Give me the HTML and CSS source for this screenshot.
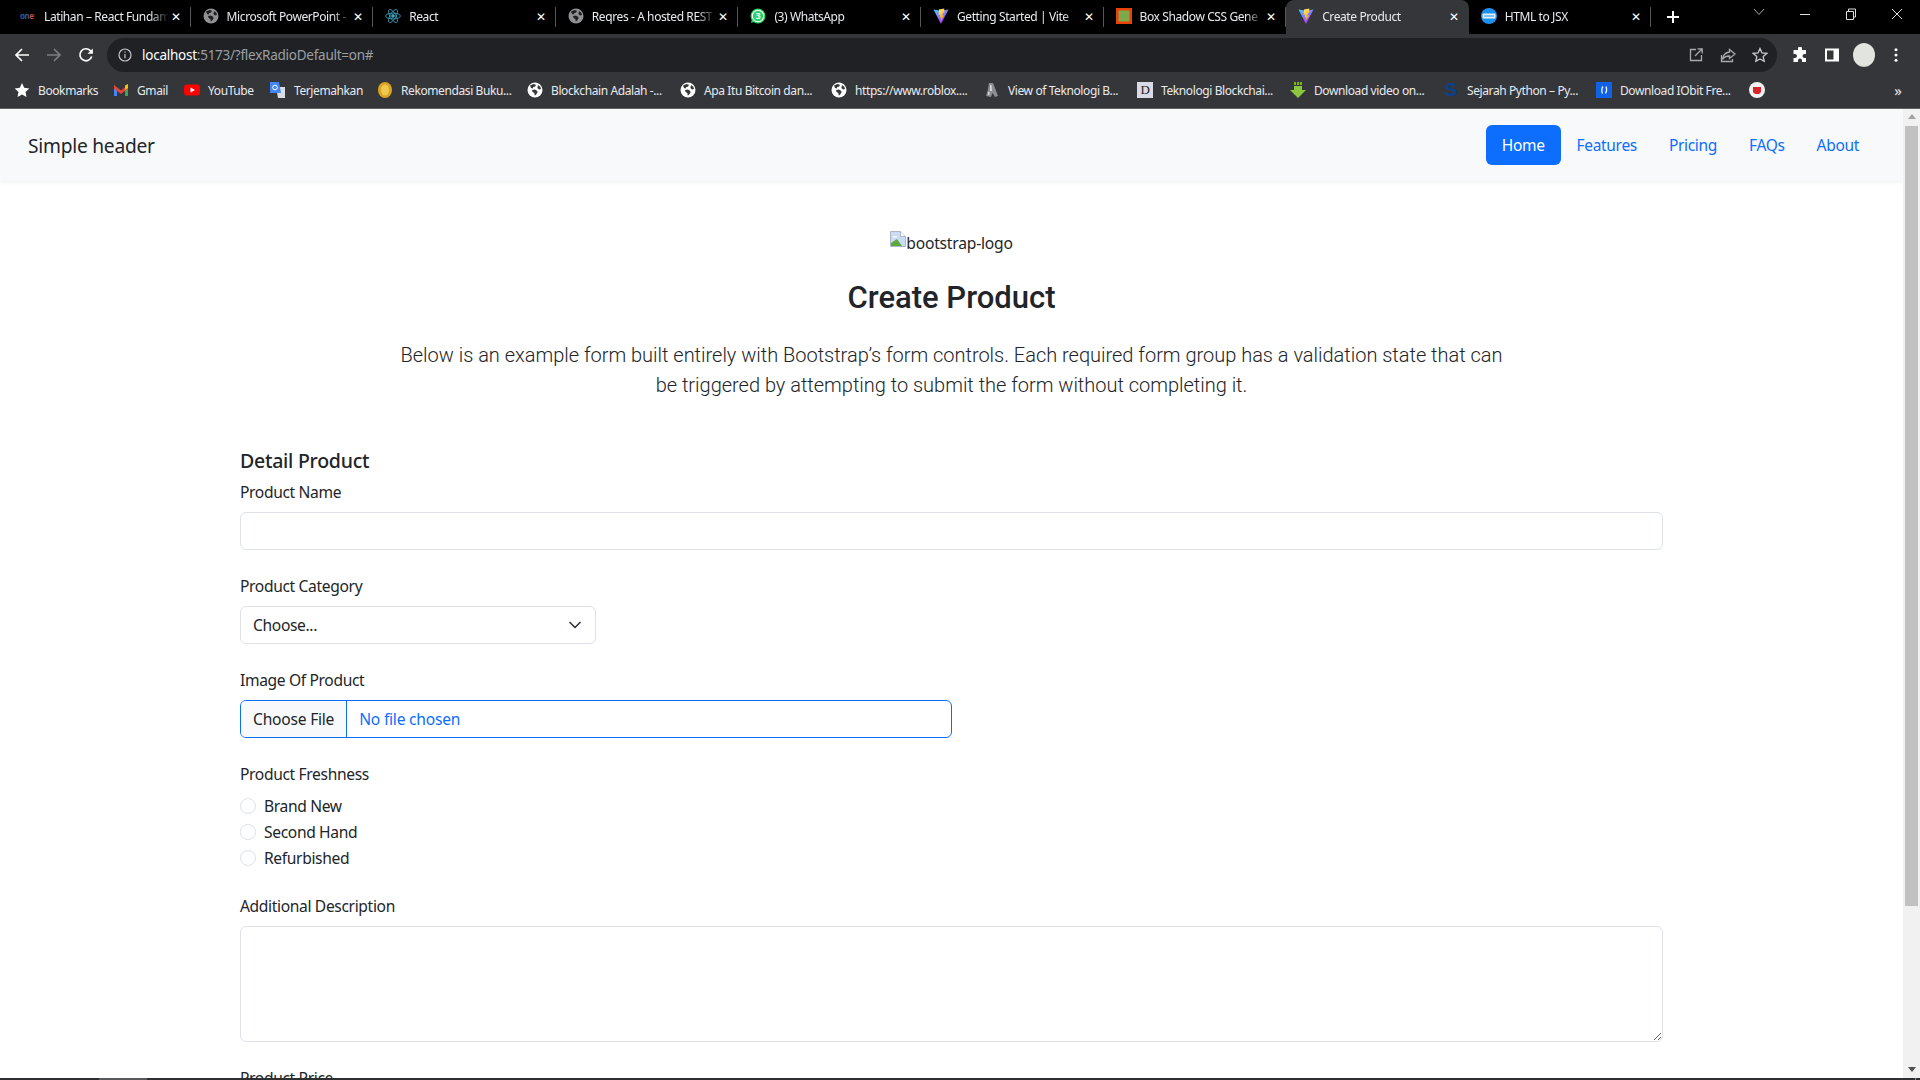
FILE: index.html
```html
<!DOCTYPE html>
<html lang="en">
<head>
<meta charset="utf-8">
<title>Create Product</title>
<link rel="stylesheet" href="styles.css">
</head>
<body>
<svg class="defs" width="0" height="0" aria-hidden="true">
  <defs>
    <linearGradient id="vp" x1="0" y1="0" x2="0.6" y2="1"><stop offset="0" stop-color="#41d1ff"/><stop offset="1" stop-color="#bd34fe"/></linearGradient>
    <linearGradient id="vy" x1="0" y1="0" x2="0.4" y2="1"><stop offset="0" stop-color="#ffea83"/><stop offset="1" stop-color="#ffa800"/></linearGradient>
    <symbol id="globe" viewBox="0 0 16 16"><circle cx="8" cy="8" r="7.5" fill="currentColor"/><path d="M3 3.5 6.5 2l2.5.7-1 2-1.7.3-.6 1.6-1.7-.6zM5 8l3-.5 2.3 1.5.2 1.6-1.8 2.4-.9.5-.5-2.6L5.600 10zM11 3l2.300 1.800.7 2.200-2 .5-1.600-1.500z" fill="#000" fill-opacity=".78"/></symbol>
    <symbol id="vite" viewBox="0 0 16 16"><path d="M15.500 1.500 8.300 15.300a.4.4 0 0 1-.7 0L.5 1.500 8 2.800z" fill="url(#vp)"/><path d="M11.300.5 6 1.500l-.3 5.500 1.600-.4-.4 3 1.500-.4-.3 3.300L11 7.500l-1.600.3.500-3 1.400.1z" fill="url(#vy)"/></symbol>
  </defs>
</svg>

<div class="screen">
  <header class="chrome">
    <div class="tabstrip">
      <div class="tab">
        <span class="fav one">on<i>e</i></span>
        <span class="tab-title">Latihan – React Fundam</span><span class="x">✕</span>
      </div>
      <div class="tab">
        <svg class="fav gray"><use href="#globe"/></svg>
        <span class="tab-title">Microsoft PowerPoint -</span><span class="x">✕</span>
      </div>
      <div class="tab">
        <svg class="fav" viewBox="0 0 16 16" fill="none" stroke="#3aa6c4" stroke-width=".8"><ellipse cx="8" cy="8" rx="7.400" ry="2.900"/><ellipse cx="8" cy="8" rx="7.400" ry="2.900" transform="rotate(60 8 8)"/><ellipse cx="8" cy="8" rx="7.400" ry="2.900" transform="rotate(120 8 8)"/><circle cx="8" cy="8" r="1.400" fill="#3aa6c4"/></svg>
        <span class="tab-title">React</span><span class="x">✕</span>
      </div>
      <div class="tab">
        <svg class="fav gray"><use href="#globe"/></svg>
        <span class="tab-title">Reqres - A hosted REST</span><span class="x">✕</span>
      </div>
      <div class="tab">
        <svg class="fav" viewBox="0 0 16 16"><circle cx="8" cy="8" r="7.500" fill="#25d366"/><path d="M1 15l1.200-4.500 3 3z" fill="#25d366"/><circle cx="8" cy="8" r="5.700" fill="none" stroke="#fff" stroke-width="1.100"/><text x="8" y="11.200" class="wa-num" text-anchor="middle">3</text></svg>
        <span class="tab-title">(3) WhatsApp</span><span class="x">✕</span>
      </div>
      <div class="tab">
        <svg class="fav"><use href="#vite"/></svg>
        <span class="tab-title">Getting Started | Vite</span><span class="x">✕</span>
      </div>
      <div class="tab">
        <svg class="fav" viewBox="0 0 16 16"><rect width="16" height="16" fill="#e8410c"/><rect x="2.500" y="2.500" width="11" height="11" fill="#7fa84a"/></svg>
        <span class="tab-title">Box Shadow CSS Gene</span><span class="x">✕</span>
      </div>
      <div class="tab active">
        <svg class="fav"><use href="#vite"/></svg>
        <span class="tab-title">Create Product</span><span class="x">✕</span>
      </div>
      <div class="tab last">
        <svg class="fav" viewBox="0 0 16 16"><circle cx="8" cy="8" r="8" fill="#1e90ee"/><rect x="1.500" y="5.500" width="13" height="5" rx="1" fill="#dff0ff"/><rect x="3" y="7.500" width="10" height="1" fill="#1e90ee"/></svg>
        <span class="tab-title">HTML to JSX</span><span class="x">✕</span>
      </div>
      <div class="newtab">
        <svg width="14" height="14" viewBox="0 0 14 14"><path d="M7 1v12M1 7h12" stroke="#fff" stroke-width="2"/></svg>
      </div>
      <div class="winctl">
        <svg class="w-chev" width="12" height="8" viewBox="0 0 12 8" fill="none" stroke="#aaa"><path d="M1 1l5 5.500L11 1"/></svg>
        <svg class="w-btn" width="46" height="12" viewBox="0 0 46 12" fill="none" stroke="#ddd"><path d="M18 6.500h10"/></svg>
        <svg class="w-btn" width="46" height="12" viewBox="0 0 46 12" fill="none" stroke="#ddd"><path d="M18.500 3.500h7v8h-7zM20.500 3.500V1h7v8h-2"/></svg>
        <svg class="w-btn" width="46" height="12" viewBox="0 0 46 12" fill="none" stroke="#ddd"><path d="M18 1l10 10M28 1 18 11"/></svg>
      </div>
    </div>

    <div class="toolbar">
      <svg class="tb-ico" viewBox="0 0 16 16" fill="none" stroke="#fff" stroke-width="1.700"><path d="M15 8H2M8 2 2 8l6 6"/></svg>
      <svg class="tb-ico" viewBox="0 0 16 16" fill="none" stroke="#7c7d7e" stroke-width="1.700"><path d="M1 8h13M8 2l6 6-6 6"/></svg>
      <svg class="tb-ico" viewBox="0 0 16 16" fill="none" stroke="#fff" stroke-width="1.700"><path d="M13.700 9.500A6 6 0 1 1 12.300 3.600L14.500 6"/><path d="M14.800 1.500v5.200H9.600z" stroke="none" fill="#fff"/></svg>
      <div class="omnibox">
        <svg class="info" viewBox="0 0 14 14" fill="none" stroke="#c4c7c9" stroke-width="1.200"><circle cx="7" cy="7" r="6"/><path d="M7 6v4.300M7 3.500v1.300"/></svg>
        <span class="url"><b>localhost</b>:5173/?flexRadioDefault=on#</span>
        <div class="omni-right">
          <svg class="om-ico" viewBox="0 0 16 16" fill="none" stroke="#a8abae" stroke-width="1.300"><path d="M8 2.500H2.500v11h11V8M7 9l7-7M9.500 1.800h4.700v4.700"/></svg>
          <svg class="om-ico" viewBox="0 0 16 16" fill="none" stroke="#a8abae" stroke-width="1.300"><path d="M9.500 2.500 15 7l-5.500 4.500V9C6 9 4 10 2.500 12.500 3 8.500 5.500 5.500 9.500 5z"/><path d="M1.500 8v6.500h11V12"/></svg>
          <svg class="om-ico" viewBox="0 0 16 16" fill="none" stroke="#c9cbce" stroke-width="1.300"><path d="m8 1.500 2 4.400 4.800.5-3.600 3.200 1 4.700L8 11.900l-4.200 2.400 1-4.700L1.200 6.400 6 5.900z"/></svg>
        </div>
      </div>
      <div class="tb-right">
        <svg class="tb-ico" viewBox="0 0 16 16" fill="#fff"><path d="M6 1.500a2 2 0 0 1 4 0V3h4v4h-1.500a2 2 0 0 0 0 4H14v4h-4v-1.500a2 2 0 0 0-4 0V15H1.500v-4H3a2 2 0 0 0 0-4H1.500V3H6z"/></svg>
        <svg class="tb-ico" viewBox="0 0 16 16"><path d="M1 1.500h14v13H1z" fill="#fff"/><path d="M3 3.500h6.500v9H3z" fill="#35363a"/></svg>
        <span class="avatar"></span>
        <svg class="tb-ico" viewBox="0 0 16 16" fill="#fff"><circle cx="8" cy="2.800" r="1.500"/><circle cx="8" cy="8" r="1.500"/><circle cx="8" cy="13.200" r="1.500"/></svg>
      </div>
    </div>

    <nav class="bookmarks">
      <span class="bm w-a"><svg class="bm-ico" viewBox="0 0 16 16" fill="#fff"><path d="m8 1 2.200 4.800 5.100.6-3.800 3.500 1 5.100L8 12.400 3.500 15l1-5.100L.7 6.400l5.100-.6z"/></svg>Bookmarks</span>
      <span class="bm w-b"><svg class="bm-ico" viewBox="0 0 16 16"><path d="M1 3v11h3V7z" fill="#4285f4"/><path d="M15 3v11h-3V7z" fill="#34a853"/><path d="M1 3l7 5.500L15 3v3.500L8 12 1 6.500z" fill="#ea4335"/><path d="M12 3.500 15 2v4l-3 2z" fill="#fbbc04"/></svg>Gmail</span>
      <span class="bm w-c"><svg class="bm-ico" viewBox="0 0 16 16"><rect y="2.500" width="16" height="11" rx="3" fill="#f00"/><path d="m6.500 5.500 4.500 2.500-4.500 2.500z" fill="#fff"/></svg>YouTube</span>
      <span class="bm w-d"><svg class="bm-ico" viewBox="0 0 16 16"><path d="M6 5h9v11H8z" fill="#dadce0"/><path d="M0 0h9l2 11H0z" fill="#4285f4"/><circle cx="5" cy="5.500" r="2.300" fill="none" stroke="#fff"/></svg>Terjemahkan</span>
      <span class="bm w-f"><svg class="bm-ico" viewBox="0 0 16 16"><ellipse cx="8" cy="8" rx="7" ry="8" fill="#d9a520"/><ellipse cx="8" cy="8" rx="4" ry="5.500" fill="#f1c84f"/></svg>Rekomendasi Buku...</span>
      <span class="bm"><svg class="bm-ico white"><use href="#globe"/></svg>Blockchain Adalah -...</span>
      <span class="bm w-g"><svg class="bm-ico white"><use href="#globe"/></svg>Apa Itu Bitcoin dan...</span>
      <span class="bm"><svg class="bm-ico white"><use href="#globe"/></svg>https://www.roblox....</span>
      <span class="bm"><svg class="bm-ico" viewBox="0 0 16 16"><path d="M5 1h4l2 5 3 8-3 1-2.500-4L7 15l-5-1 2-7z" fill="#8a8d92"/><path d="M6 3h1.500l.5 6H6zM4 10h1.500v3H4z" fill="#d6d7d9"/></svg>View of Teknologi B...</span>
      <span class="bm"><span class="bm-ico wiki">D</span>Teknologi Blockchai...</span>
      <span class="bm"><svg class="bm-ico" viewBox="0 0 16 16"><path d="M4 0h2v3H4zM7 0h2v3H7zM10 0h2v3h-2z" fill="#7ab800"/><path d="M4 4h8v4h4l-8 8-8-8h4z" fill="#8cc63f"/></svg>Download video on...</span>
      <span class="bm"><span class="bm-ico scribd">S</span>Sejarah Python – Py...</span>
      <span class="bm"><svg class="bm-ico" viewBox="0 0 16 16"><rect width="16" height="16" fill="#0f62e6"/><path d="M7 4.500C5.500 6 5.500 10 6.500 11.500M10 4.500c.8 2 .8 5-.5 7" stroke="#fff" fill="none" stroke-width="1.200"/></svg>Download IObit Fre...</span>
      <span class="bm w-e"><svg class="bm-ico" viewBox="0 0 16 16"><circle cx="8" cy="8" r="8" fill="#f1f1f1"/><path d="M4 5h8v5l-2 2H6l-2-2z" fill="#d8232a"/></svg></span>
      <span class="more">»</span>
    </nav>
  </header>

  <div class="viewport">
    <main class="page">
      <div class="navbar">
        <span class="brand">Simple header</span>
        <ul class="pills">
          <li class="pill current">Home</li>
          <li class="pill">Features</li>
          <li class="pill">Pricing</li>
          <li class="pill">FAQs</li>
          <li class="pill">About</li>
        </ul>
      </div>

      <section class="hero">
        <div class="logo-alt">
          <svg class="broken" width="16" height="16" viewBox="0 0 16 16"><path d="M.5.500h10l5 5v10H.5z" fill="#c9dcf6" stroke="#aeb6c6"/><path d="M10.500.5v5h5" fill="#fff" stroke="#aeb6c6"/><path d="M1 15v-3l6-4 5 7z" fill="#5da83a"/><path d="M3 5h4v1.500H3z" fill="#fff"/></svg><span>bootstrap-logo</span>
        </div>
        <h1 class="title">Create Product</h1>
        <p class="lead">Below is an example form built entirely with Bootstrap’s form controls. Each required form group has a validation state that can be triggered by attempting to submit the form without completing it.</p>
      </section>

      <form class="form">
        <h2 class="section-title">Detail Product</h2>
        <div class="group first">
          <label class="lbl" for="pn">Product Name</label>
          <input class="control" id="pn" type="text">
        </div>
        <div class="group">
          <label class="lbl" for="pc">Product Category</label>
          <div class="control select" id="pc">Choose...
            <svg class="caret" width="16" height="16" viewBox="0 0 16 16" fill="none" stroke="#343a40" stroke-width="1.700" stroke-linecap="round" stroke-linejoin="round"><path d="m3 5.500 5 5 5-5"/></svg>
          </div>
        </div>
        <div class="group">
          <label class="lbl">Image Of Product</label>
          <div class="control file"><span class="file-btn">Choose File</span><span class="file-name">No file chosen</span></div>
        </div>
        <div class="group">
          <label class="lbl">Product Freshness</label>
          <div class="radios">
            <label class="radio"><input type="radio" class="dot" name="f">Brand New</label>
            <label class="radio"><input type="radio" class="dot" name="f">Second Hand</label>
            <label class="radio"><input type="radio" class="dot" name="f">Refurbished</label>
          </div>
        </div>
        <div class="group">
          <label class="lbl" for="ad">Additional Description</label>
          <textarea class="control area" id="ad"></textarea>
        </div>
        <div class="group">
          <label class="lbl">Product Price</label>
        </div>
      </form>
    </main>
    <aside class="scrollbar">
      <span class="arrow up"></span>
      <span class="thumb"></span>
      <span class="arrow down"></span>
    </aside>
  </div>
  <footer class="taskedge"><span class="edge-lit"></span><span class="edge-tick"></span></footer>
</div>
</body>
</html>
```
FILE: styles.css
```css
* { box-sizing: border-box; }
html, body { margin: 0; height: 100%; overflow: hidden; background: #fff; }
body { font-family: "Noto Sans", "Open Sans", sans-serif; color: #212529; font-size: 15.600px; }
.defs { display: block; height: 0; }
.screen { height: 1080px; display: flex; flex-direction: column; }

/* browser chrome */
.chrome { flex: none; height: 109px; background: #35363a; border-bottom: 1px solid #5e5f61; color: #fff; font-size: 12px; }
.tabstrip { height: 34px; background: #000; display: flex; align-items: center; padding-left: 8px; }
.tab { width: 182.600px; height: 34px; display: flex; align-items: center; padding: 0 8px 2px 12px; position: relative; flex: none; }
.tab::after { content: ""; position: absolute; right: 0; top: 7px; height: 20px; width: 1px; background: #55565a; }
.tab.active { background: #35363a; border-radius: 8px 8px 0 0; }
.tab.active::after { display: none; }
.fav { width: 16px; height: 16px; flex: none; margin-right: 8px; display: block; }
.gray { color: #8f9194; }
.one { font: bold 8px "Noto Sans", sans-serif; color: #2a5ba8; line-height: 16px; letter-spacing: -.5px; }
.one i { color: #d8432e; font-style: normal; }
.tab-title { flex: 1; min-width: 0; white-space: nowrap; overflow: hidden; color: #e8eaed; letter-spacing: -.4px; -webkit-mask-image: linear-gradient(90deg, #000 85%, transparent); mask-image: linear-gradient(90deg, #000 85%, transparent); }
.wa-num { fill: #fff; font-size: 9px; font-weight: 700; }
.x { width: 14px; flex: none; text-align: center; font-size: 11.500px; color: #fff; }
.newtab { width: 44px; display: flex; justify-content: center; }
.winctl { margin-left: auto; display: flex; align-items: flex-start; height: 34px; padding-top: 8px; }
.w-chev { margin: 0 17px 0 0; }
.w-btn { display: block; width: 46px; }

.toolbar { height: 38.500px; display: flex; align-items: center; padding: 3px 0 0 14px; }
.tb-ico { width: 16px; height: 16px; flex: none; margin-right: 16px; display: block; }
.omnibox { width: 1673px; height: 34.500px; margin-left: -3px; background: #202124; border-radius: 17px; display: flex; align-items: center; padding: 0 0 0 11px; }
.info { width: 14px; height: 14px; flex: none; margin-right: 10px; }
.url { color: #9aa0a6; font-size: 13.500px; letter-spacing: -.25px; white-space: nowrap; }
.url b { color: #fff; font-weight: 400; }
.omni-right { margin-left: auto; display: flex; gap: 16px; padding-right: 9px; }
.om-ico { width: 16px; height: 16px; display: block; }
.tb-right { display: flex; align-items: center; padding-left: 15px; }
.avatar { width: 22px; height: 24px; border-radius: 50%; background: radial-gradient(circle at 50% 40%, #e2e5df 70%, #6d6f6b 100%); margin: 0 13px 0 -3px; flex: none; }

.bookmarks { height: 35.500px; display: flex; align-items: center; padding-left: 14px; }
.bm { width: 153px; flex: none; display: flex; align-items: center; white-space: nowrap; overflow: hidden; color: #e8eaed; letter-spacing: -.4px; }
.w-a { width: 99px; } .w-b { width: 71px; } .w-c { width: 86px; } .w-d { width: 107px; } .w-e { width: 30px; } .w-f { width: 150px; } .w-g { width: 151px; }
.bm-ico { width: 16px; height: 16px; flex: none; margin-right: 8px; display: block; }
.white { color: #fff; }
.wiki { background: #d8dbe6; color: #222; font: 13px/16px "Liberation Serif", serif; text-align: center; }
.scribd { color: #0b3f8c; font: 900 19px/16px "Liberation Sans", sans-serif; text-align: center; }
.more { margin-left: auto; margin-right: 18px; font-size: 15px; color: #e8eaed; line-height: 1; }

/* page viewport */
.viewport { flex: 1; min-height: 0; display: flex; }
.page { flex: 1; min-width: 0; overflow: hidden; }
.navbar { height: 72px; background: #f8f9fa; display: flex; align-items: center; justify-content: space-between; padding: 0 28px; box-shadow: 0 2px 3px rgba(0,0,0,.05); position: relative; }
.brand { font-size: 19.200px; letter-spacing: -.25px; }
.pills { list-style: none; margin: 0; padding: 0; display: flex; }
.pill { padding: 8px 16px; line-height: 24px; color: #0d6efd; border-radius: 6px; font-size: 15.500px; letter-spacing: -.32px; }
.pill.current { background: #0d6efd; color: #fff; }

.hero { padding-top: 50px; text-align: center; }
.logo-alt { height: 24px; display: flex; justify-content: center; align-items: flex-start; line-height: 24px; letter-spacing: -.2px; }
.title { font: 500 31px/38px Roboto, sans-serif; margin: 24px 0 23px; color: #212529; }
.lead { font: 300 20px/30px Roboto, sans-serif; margin: 0 auto; width: 1120px; color: #212529; letter-spacing: -.015px; }

.form { margin: 49px 240px 0; }
.section-title { font-size: 19.500px; font-weight: 500; line-height: 24px; margin: 0 0 7px; letter-spacing: -.25px; }
.group { margin-bottom: 24px; }
.lbl { display: block; line-height: 24px; margin-bottom: 8px; letter-spacing: -.35px; }
.control { display: block; width: 100%; height: 38px; border: 1px solid #dee2e6; border-radius: 6px; background: #fff; font: inherit; padding: 6px 12px; color: #212529; letter-spacing: -.35px; line-height: 24px; }
.select { width: 356px; position: relative; }
.caret { position: absolute; right: 12px; top: 10px; width: 16px; height: 16px; }
.file { width: 712px; border-color: #0d6efd; padding: 0; display: flex; overflow: hidden; letter-spacing: -.22px; }
.file-btn { background: #f8f9fa; border-right: 1px solid #0d6efd; padding: 6px 12px; }
.file-name { color: #0d6efd; padding: 6px 12px; }
.radios { display: flex; flex-direction: column; margin: -1px 0 -1px; }
.radio { display: flex; align-items: center; height: 26px; letter-spacing: -.35px; }
.dot { appearance: none; -webkit-appearance: none; width: 16px; height: 16px; border: 1px solid #dee2e6; border-radius: 50%; margin: 0 8px 0 0; background: #fff; }
.area { height: 116px; resize: vertical; }

.scrollbar { flex: none; width: 17px; background: #f1f1f1; display: flex; flex-direction: column; align-items: center; padding-top: 5px; }
.arrow { display: block; width: 0; height: 0; border-left: 4.500px solid transparent; border-right: 4.500px solid transparent; }
.arrow.up { border-bottom: 5px solid #a3a3a3; margin-bottom: 7px; }
.arrow.down { border-top: 5px solid #505050; margin-top: 161px; }
.thumb { width: 13px; height: 780px; background: #c1c1c1; }
.taskedge { flex: none; height: 2px; background: #2e2f31; position: relative; }
.edge-lit { display: block; position: absolute; left: 99px; width: 48px; top: 0; bottom: 0; background: #58595a; }
.edge-tick { display: block; position: absolute; left: 1915px; width: 1px; top: 0; bottom: 0; background: #8a8a8a; }
```
